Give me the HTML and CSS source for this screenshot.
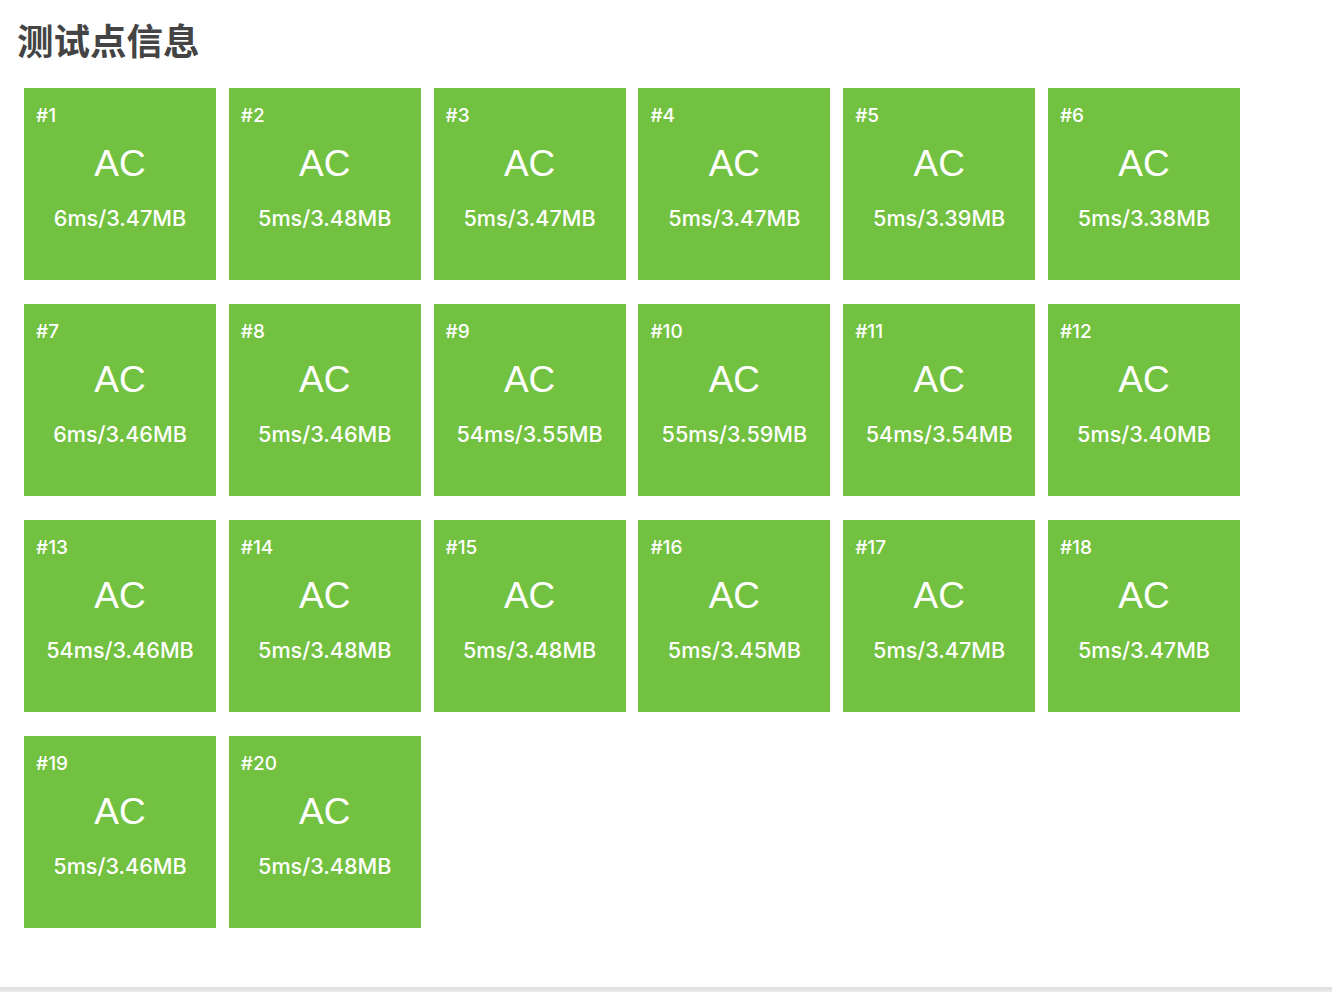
FILE: index.html
```html
<!DOCTYPE html>
<html lang="zh">
<head>
<meta charset="utf-8">
<title>测试点信息</title>
<link rel="stylesheet" href="styles.css">
</head>
<body>
<div class="page">
  <h2 class="title">测试点信息</h2>
  <div class="grid">
    <div class="case"><div class="num">#1</div><div class="status">AC</div><div class="metric">6ms/3.47MB</div></div>
    <div class="case"><div class="num">#2</div><div class="status">AC</div><div class="metric">5ms/3.48MB</div></div>
    <div class="case"><div class="num">#3</div><div class="status">AC</div><div class="metric">5ms/3.47MB</div></div>
    <div class="case"><div class="num">#4</div><div class="status">AC</div><div class="metric">5ms/3.47MB</div></div>
    <div class="case"><div class="num">#5</div><div class="status">AC</div><div class="metric">5ms/3.39MB</div></div>
    <div class="case"><div class="num">#6</div><div class="status">AC</div><div class="metric">5ms/3.38MB</div></div>
    <div class="case"><div class="num">#7</div><div class="status">AC</div><div class="metric">6ms/3.46MB</div></div>
    <div class="case"><div class="num">#8</div><div class="status">AC</div><div class="metric">5ms/3.46MB</div></div>
    <div class="case"><div class="num">#9</div><div class="status">AC</div><div class="metric">54ms/3.55MB</div></div>
    <div class="case"><div class="num">#10</div><div class="status">AC</div><div class="metric">55ms/3.59MB</div></div>
    <div class="case"><div class="num">#11</div><div class="status">AC</div><div class="metric">54ms/3.54MB</div></div>
    <div class="case"><div class="num">#12</div><div class="status">AC</div><div class="metric">5ms/3.40MB</div></div>
    <div class="case"><div class="num">#13</div><div class="status">AC</div><div class="metric">54ms/3.46MB</div></div>
    <div class="case"><div class="num">#14</div><div class="status">AC</div><div class="metric">5ms/3.48MB</div></div>
    <div class="case"><div class="num">#15</div><div class="status">AC</div><div class="metric">5ms/3.48MB</div></div>
    <div class="case"><div class="num">#16</div><div class="status">AC</div><div class="metric">5ms/3.45MB</div></div>
    <div class="case"><div class="num">#17</div><div class="status">AC</div><div class="metric">5ms/3.47MB</div></div>
    <div class="case"><div class="num">#18</div><div class="status">AC</div><div class="metric">5ms/3.47MB</div></div>
    <div class="case"><div class="num">#19</div><div class="status">AC</div><div class="metric">5ms/3.46MB</div></div>
    <div class="case"><div class="num">#20</div><div class="status">AC</div><div class="metric">5ms/3.48MB</div></div>
  </div>
</div>
<div class="footer-bar"></div>
</body>
</html>
```

FILE: styles.css
```css
html, body {
  margin: 0;
  padding: 0;
  background: #ffffff;
}

body {
  font-family: "Liberation Sans", "Noto Sans CJK SC", sans-serif;
  overflow: hidden;
}

.page {
  height: 987px;
  box-sizing: border-box;
  padding: 20px 0 0 0;
}

.title {
  margin: 0 0 0 17px;
  font-family: "Noto Sans CJK SC", sans-serif;
  font-size: 36.5px;
  font-weight: 700;
  line-height: 40px;
  color: #444444;
}

.grid {
  display: grid;
  grid-template-columns: repeat(6, 192px);
  column-gap: 12.8px;
  row-gap: 24px;
  margin: 28px 0 0 24px;
}

.case {
  width: 192px;
  height: 192px;
  box-sizing: border-box;
  background: #73c141;
  color: #ffffff;
  padding: 15.5px 12px 0 12px;
  display: flex;
  flex-direction: column;
}

.num {
  font-family: "Inter", "Liberation Sans", sans-serif;
  font-size: 19px;
  font-weight: 500;
  line-height: 24px;
  height: 24px;
}

.status {
  margin-top: 14.4px;
  text-align: center;
  font-size: 37px;
  line-height: 44px;
  height: 44px;
}

.metric {
  font-family: "Inter", "Liberation Sans", sans-serif;
  margin-top: 18px;
  text-align: center;
  font-size: 21.6px;
  font-weight: 500;
  line-height: 28px;
  white-space: nowrap;
}

.footer-bar {
  height: 5px;
  background: linear-gradient(#dcdcdc, #ececec);
}
```
